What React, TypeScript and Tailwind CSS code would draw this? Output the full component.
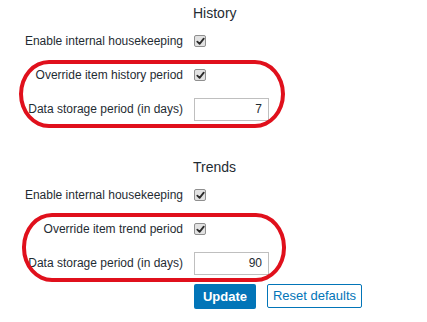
import React from "react";

function Check() {
  return (
    <span className="inline-flex h-[12px] w-[12px] items-center justify-center rounded-[2px] border border-[#8f8f8f] bg-[#e2e2e2]">
      <svg viewBox="0 0 10 10" className="h-[9px] w-[9px]">
        <path d="M1.5 5.2 L4 7.6 L8.6 1.8" fill="none" stroke="#2a2a2a" strokeWidth="2" strokeLinecap="round" strokeLinejoin="round" />
      </svg>
    </span>
  );
}

function Row({ label, children }: { label: string; children: React.ReactNode }) {
  return (
    <div className="flex h-[34px] items-center">
      <div className="w-[183px] text-right text-[12px] text-[#1f2c33]">{label}</div>
      <div className="ml-[11px] flex items-center">{children}</div>
    </div>
  );
}

function NumberField({ value }: { value: string }) {
  return (
    <input
      readOnly
      value={value}
      className="h-[23px] w-[75px] border border-[#bfbfbf] bg-white px-[6px] text-right text-[12px] text-[#1f2c33] outline-none"
    />
  );
}

function Section({ title, override }: { title: string; override: string }) {
  return (
    <div>
      <div className="flex h-[22px] items-center">
        <div className="ml-[193px] text-[14px] text-[#1f2c33]">{title}</div>
      </div>
      <Row label="Enable internal housekeeping">
        <Check />
      </Row>
      <Row label={override}>
        <Check />
      </Row>
      <Row label="Data storage period (in days)">
        <NumberField value={title === "History" ? "7" : "90"} />
      </Row>
    </div>
  );
}

export default function App() {
  return (
    <div className="relative h-[322px] w-[427px] overflow-hidden bg-white pt-[2px] font-['Liberation_Sans',Arial,sans-serif]">
      <Section title="History" override="Override item history period" />
      <div className="h-[30px]" />
      <Section title="Trends" override="Override item trend period" />
      <div className="ml-[194px] mt-[4px] flex gap-[11px]">
        <button className="h-[25px] w-[62px] rounded-[2px] bg-[#0275b8] text-[13px] font-bold text-white">Update</button>
        <button className="h-[24px] w-[95px] rounded-[2px] border border-[#0275b8] bg-white text-[13px] text-[#0275b8]">Reset defaults</button>
      </div>

      {/* red annotation marks */}
      <div className="pointer-events-none absolute left-[19px] top-[60px] h-[68px] w-[266px] rounded-[30px/34px] border-[4px] border-[#e0101c]" />
      <div className="pointer-events-none absolute left-[22px] top-[213px] h-[69px] w-[264px] rounded-[30px/34px] border-[4px] border-[#e0101c]" />
    </div>
  );
}
